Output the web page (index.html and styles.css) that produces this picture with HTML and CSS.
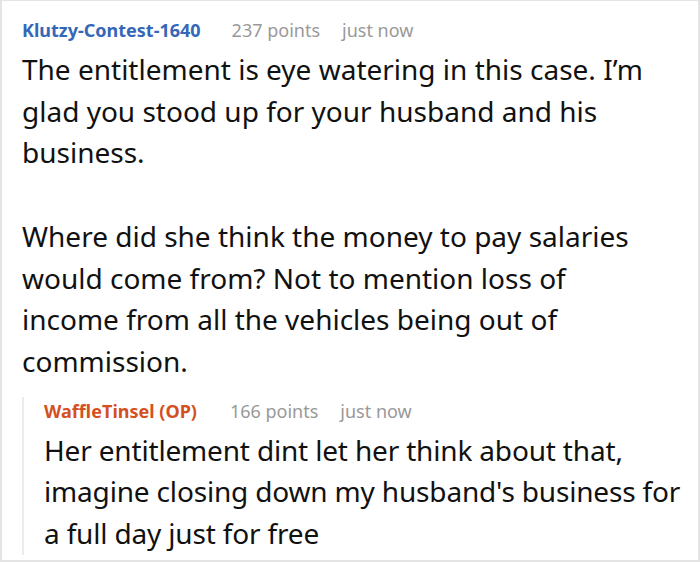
FILE: index.html
```html
<!DOCTYPE html>
<html>
<head>
<meta charset="utf-8">
<link rel="stylesheet" href="styles.css">
</head>
<body>
<div class="frame">
  <div class="comment">
    <div class="meta">
      <span class="user">Klutzy-Contest-1640</span>
      <span class="info">237 points</span>
      <span class="info">just now</span>
    </div>
    <div class="body main">
      <p>The entitlement is eye watering in this case. I’m glad you stood up for your husband and his business.</p>
      <p>Where did she think the money to pay salaries would come from? Not to mention loss of income from all the vehicles being out of commission.</p>
    </div>
    <div class="reply">
      <div class="meta">
        <span class="user op">WaffleTinsel (OP)</span>
        <span class="info">166 points</span>
        <span class="info">just now</span>
      </div>
      <div class="body">
        <p>Her entitlement dint let her think about that, imagine closing down my husband's business for a full day just for free</p>
      </div>
    </div>
  </div>
</div>
</body>
</html>
```

FILE: styles.css
```css
html, body {
  margin: 0;
  padding: 0;
  background: #ffffff;
}
.frame {
  box-sizing: border-box;
  width: 700px;
  height: 562px;
  border-top: 1px solid #e4e4e4;
  border-left: 2px solid #e4e4e4;
  border-right: 2px solid #e4e4e4;
  border-bottom: 2px solid #e4e4e4;
  overflow: hidden;
  font-family: "Noto Sans", "Open Sans", sans-serif;
}
.comment {
  padding: 15px 8px 0 20px;
}
.meta {
  display: flex;
  gap: 22px;
  font-size: 18px;
  line-height: 28px;
}
.user {
  color: #3567b8;
  font-weight: 700;
  margin-right: 9px;
}
.user.op {
  color: #d4501f;
  margin-right: 11px;
}
.info {
  color: #999999;
}
.body {
  color: #111111;
  font-size: 28px;
  line-height: 41.7px;
  margin-top: 5px;
}
.body.main {
  max-width: 632px;
}
.body p {
  margin: 0 0 41.7px 0;
}
.body p:last-child {
  margin-bottom: 0;
}
.reply {
  margin-top: 28px;
  border-left: 2px solid #ececec;
  padding-left: 20px;
}
.reply .meta {
  margin-top: -14px;
}
.reply .body {
  margin-bottom: -12px;
  letter-spacing: -0.17px;
}
```
